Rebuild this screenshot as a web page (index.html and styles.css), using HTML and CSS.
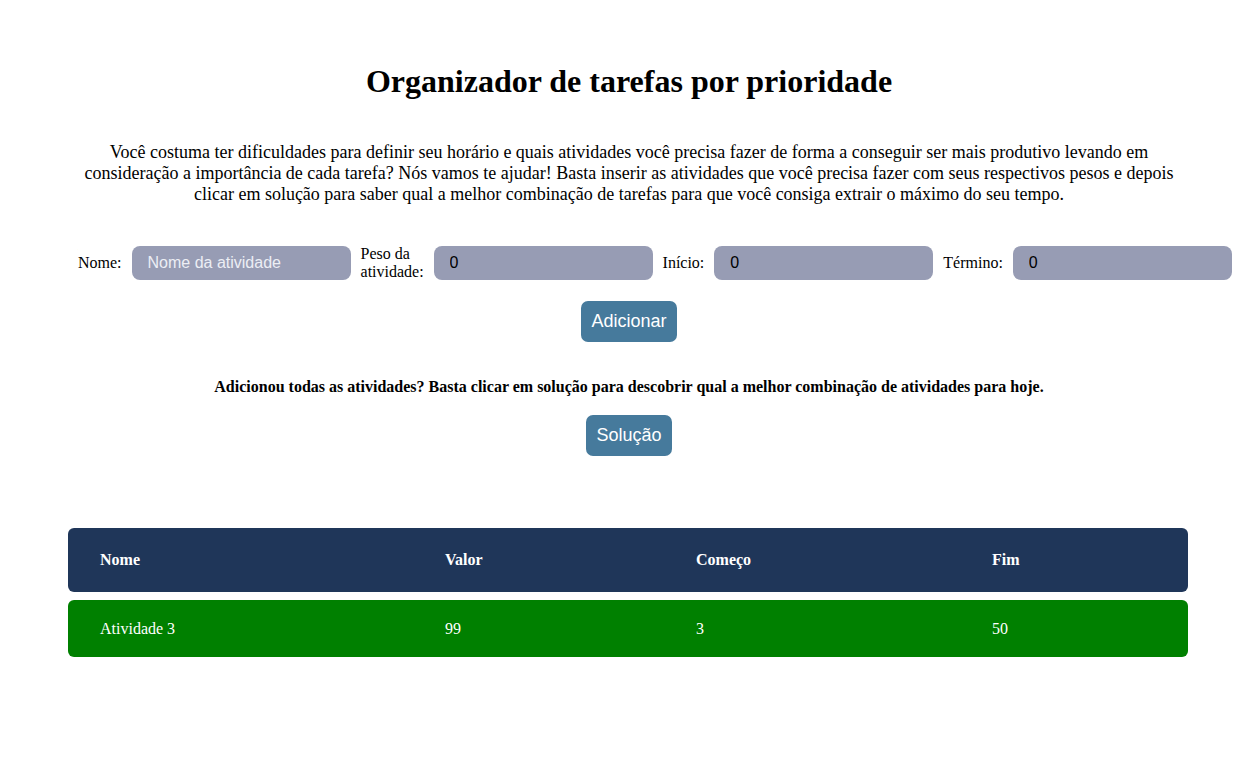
FILE: index.html
```html
<!DOCTYPE html>
<html lang="pt">
<head>
<meta charset="utf-8">
<title>Organizador de tarefas por prioridade</title>
<link rel="stylesheet" href="styles.css">
</head>
<body>
<h1 class="title">Organizador de tarefas por prioridade</h1>
<p class="intro">Você costuma ter dificuldades para definir seu horário e quais atividades você precisa fazer de forma a conseguir ser mais produtivo levando em consideração a importância de cada tarefa? Nós vamos te ajudar! Basta inserir as atividades que você precisa fazer com seus respectivos pesos e depois clicar em solução para saber qual a melhor combinação de tarefas para que você consiga extrair o máximo do seu tempo.</p>
<div class="form-row">
  <label class="lbl">Nome:</label>
  <input class="field" type="text" placeholder="Nome da atividade">
  <label class="lbl lbl-wrap">Peso da atividade:</label>
  <input class="field" type="text" value="0">
  <label class="lbl">Início:</label>
  <input class="field" type="text" value="0">
  <label class="lbl">Término:</label>
  <input class="field" type="text" value="0">
</div>
<div class="actions actions-add">
  <button class="btn">Adicionar</button>
</div>
<p class="hint">Adicionou todas as atividades? Basta clicar em solução para descobrir qual a melhor combinação de atividades para hoje.</p>
<div class="actions actions-sol">
  <button class="btn">Solução</button>
</div>
<div class="table">
  <div class="trow thead">
    <div>Nome</div><div>Valor</div><div>Começo</div><div>Fim</div>
  </div>
  <div class="trow tbody">
    <div>Atividade 3</div><div>99</div><div>3</div><div>50</div>
  </div>
</div>
</body>
</html>
```

FILE: styles.css
```css
body {
  margin: 8px;
  font-family: "Liberation Serif", "Times New Roman", serif;
  color: #000;
  background: #fff;
}
.title {
  font-size: 32px;
  font-weight: bold;
  text-align: center;
  margin: 55px 0 0;
  line-height: 37px;
}
.intro {
  font-size: 18px;
  line-height: 21px;
  text-align: center;
  max-width: 1100px;
  margin: 42px auto 0;
}
.form-row {
  display: flex;
  align-items: center;
  gap: 10px;
  margin-top: 40px;
  padding-left: 70px;
}
.lbl {
  font-size: 16px;
  line-height: 18px;
  white-space: nowrap;
}
.lbl-wrap {
  white-space: normal;
  width: 63px;
}
.field {
  box-sizing: border-box;
  width: 219px;
  height: 34px;
  border: none;
  border-radius: 8px;
  background: #979cb4;
  padding: 0 16px;
  font-family: "Liberation Sans", Arial, sans-serif;
  font-size: 16px;
  color: #000;
  outline: none;
}
.field::placeholder {
  color: #eceef4;
}
.actions {
  display: flex;
  justify-content: center;
}
.actions-add {
  margin-top: 20px;
}
.actions-sol {
  margin-top: 19px;
}
.btn {
  border: none;
  border-radius: 7px;
  background: #467a9c;
  color: #fff;
  font-family: "Liberation Sans", Arial, sans-serif;
  font-size: 18px;
  height: 41px;
  padding: 0 10px;
  cursor: pointer;
}
.hint {
  font-size: 16px;
  font-weight: bold;
  text-align: center;
  margin: 36px 0 0;
  line-height: 18px;
}
.table {
  margin: 72px 0 0 60px;
  width: 1120px;
  display: flex;
  flex-direction: column;
  gap: 8px;
}
.trow {
  display: grid;
  grid-template-columns: 345px 251px 296px 1fr;
  padding: 0 32px;
  align-items: center;
  border-radius: 6px;
  color: #fff;
  font-size: 16px;
}
.thead {
  background: #1f3659;
  height: 64px;
  font-weight: bold;
}
.tbody {
  background: #008000;
  height: 57px;
}
```
